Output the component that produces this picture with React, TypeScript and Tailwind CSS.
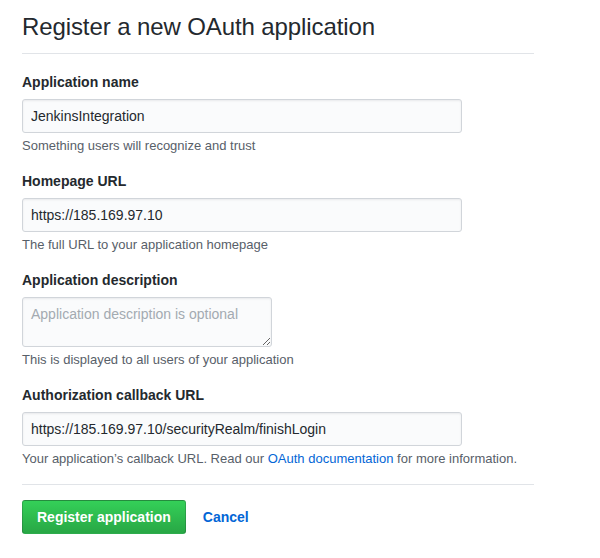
import React from 'react'

const fields = [
  { label: 'Application name', value: 'JenkinsIntegration', hint: 'Something users will recognize and trust' },
  { label: 'Homepage URL', value: 'https://185.169.97.10', hint: 'The full URL to your application homepage' },
]

const inputClass =
  'block h-[34px] w-[440px] rounded-[3px] border border-[#d1d5da] bg-[#fafbfc] px-2 text-[14px] leading-[20px] text-[#24292e] shadow-[inset_0_1px_2px_rgba(27,31,35,0.075)] outline-none'

const Label = ({ children }: { children: React.ReactNode }) => (
  <label className="mb-[7px] block text-[14px] font-bold leading-[20px] text-[#24292e]">{children}</label>
)

const Hint = ({ children }: { children: React.ReactNode }) => (
  <p className="mt-[4px] text-[13px] leading-[18px] text-[#586069]">{children}</p>
)

export default function App() {
  return (
    <div className="min-h-[558px] bg-white px-[22px] font-['Liberation_Sans',Arial,sans-serif]">
      <div className="w-[512px]">
        {/* Header */}
        <div className="mb-[18px] border-b border-[#e1e4e8] pb-2 pt-[9px]">
          <h1 className="text-[24px] font-normal leading-[36px] tracking-[-0.1px] text-[#24292e]">
            Register a new OAuth application
          </h1>
        </div>

        <form className="flex flex-col gap-[16px]" onSubmit={(e) => e.preventDefault()}>
          {fields.map((f) => (
            <div key={f.label}>
              <Label>{f.label}</Label>
              <input type="text" defaultValue={f.value} className={inputClass} />
              <Hint>{f.hint}</Hint>
            </div>
          ))}

          <div>
            <Label>Application description</Label>
            <textarea
              placeholder="Application description is optional"
              className="block h-[50px] w-[250px] rounded-[3px] border border-[#d1d5da] bg-[#fafbfc] px-2 py-[6px] text-[14px] leading-[20px] text-[#24292e] shadow-[inset_0_1px_2px_rgba(27,31,35,0.075)] outline-none placeholder:text-[#a3aab1]"
            />
            <Hint>This is displayed to all users of your application</Hint>
          </div>

          <div>
            <Label>Authorization callback URL</Label>
            <input type="text" defaultValue="https://185.169.97.10/securityRealm/finishLogin" className={inputClass} />
            <Hint>
              Your application’s callback URL. Read our{' '}
              <a href="#" className="text-[#0366d6]">
                OAuth documentation
              </a>{' '}
              for more information.
            </Hint>
          </div>

          {/* Actions */}
          <div className="border-t border-[#e1e4e8] pt-[15px]">
            <div className="flex items-center">
              <button
                type="submit"
                className="h-[34px] rounded-[3px] border border-[rgba(27,31,35,0.2)] bg-gradient-to-b from-[#34d058] to-[#28a745] px-[14px] text-[14px] font-bold leading-[20px] text-white"
              >
                Register application
              </button>
              <a href="#" className="ml-[17px] text-[14px] font-bold text-[#0366d6]">
                Cancel
              </a>
            </div>
          </div>
        </form>
      </div>
    </div>
  )
}
